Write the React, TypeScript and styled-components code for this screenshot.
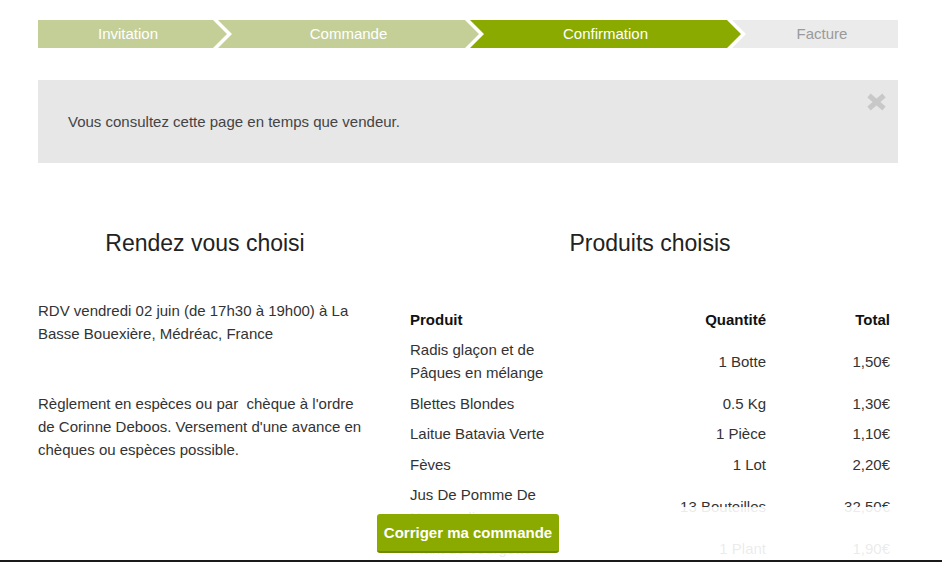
import React from "react";
import styled, { createGlobalStyle } from "styled-components";

const Global = createGlobalStyle`
  html, body { margin: 0; padding: 0; overflow: hidden; background: #fff; }
  body { font-family: "Liberation Sans", Arial, sans-serif; color: #333; }
`;

const Page = styled.div`
  width: 860px;
  margin-left: 38px;
  padding-top: 20px;
  padding-bottom: 120px;
`;

const Stepper = styled.div`
  display: flex;
  height: 28px;
`;

const D = 14;
const G = 5;

const Step = styled.div<{ $w: number; $first?: boolean; $last?: boolean; $state: string }>`
  flex: 0 0 ${(p) => p.$w}px;
  height: 28px;
  margin-left: ${(p) => (p.$first ? 0 : -(D - G))}px;
  padding: 0 ${(p) => (p.$last ? 0 : p.$first ? D - G : D)}px 0 ${(p) => (p.$first ? 0 : D)}px;
  box-sizing: border-box;
  text-align: center;
  line-height: 28px;
  font-size: 15px;
  color: ${(p) => (p.$state === "todo" ? "#9a9a9a" : "#fff")};
  background: ${(p) =>
    p.$state === "done" ? "#c4cf98" : p.$state === "active" ? "#8aaa00" : "#ebebeb"};
  clip-path: ${(p) => {
    const left = p.$first ? "0 100%, 0 0" : `0 100%, ${D}px 50%, 0 0`;
    const right = p.$last
      ? "100% 0, 100% 100%"
      : `calc(100% - ${D}px) 0, 100% 50%, calc(100% - ${D}px) 100%`;
    return `polygon(${left}, ${right})`;
  }};
`;

const Alert = styled.div`
  position: relative;
  margin-top: 32px;
  height: 83px;
  background: #e7e7e7;
  display: flex;
  align-items: center;
  padding-left: 30px;
  font-size: 15px;
  color: #444;
`;

const Close = styled.button`
  position: absolute;
  top: 12px;
  right: 11px;
  width: 22px;
  height: 20px;
  padding: 0;
  border: 0;
  background: none;
  cursor: pointer;
  display: flex;
  align-items: center;
  justify-content: center;
`;

const Columns = styled.div`
  display: grid;
  grid-template-columns: 334px 1fr;
  column-gap: 30px;
  margin-top: 65px;
`;

const Column = styled.div`
  display: flex;
  flex-direction: column;
`;

const Heading = styled.h2`
  margin: 0;
  font-weight: normal;
  font-size: 23px;
  line-height: 30px;
  color: #222;
  text-align: center;
`;

const Para = styled.p<{ $mt: number }>`
  margin: ${(p) => p.$mt}px 0 0;
  font-size: 15px;
  line-height: 23px;
  color: #333;
`;

const Table = styled.table`
  margin-top: 46px;
  width: 100%;
  border-collapse: collapse;
  table-layout: fixed;
  font-size: 15px;
  line-height: 23px;
  color: #333;
`;

const Th = styled.th<{ $align?: string }>`
  padding: 3.75px 8px;
  text-align: ${(p) => p.$align || "left"};
  font-weight: bold;
  color: #111;
`;

const Td = styled.td<{ $align?: string }>`
  padding: 3.75px 8px;
  text-align: ${(p) => p.$align || "left"};
  vertical-align: middle;
`;

const Footer = styled.div`
  position: fixed;
  left: 0;
  right: 0;
  bottom: 0;
  height: 55px;
  box-sizing: border-box;
  background: rgba(255, 255, 255, 0.9);
  border-bottom: 2px solid #1a1a1a;
  display: flex;
  padding-left: 38px;
`;

const FooterInner = styled.div`
  width: 860px;
  display: flex;
  align-items: center;
  justify-content: center;
`;

const Button = styled.button`
  font-family: "Liberation Sans", Arial, sans-serif;
  font-weight: bold;
  font-size: 15px;
  color: #fff;
  background: #8aaa00;
  border: 0;
  border-bottom: 2px solid #6f8a00;
  border-radius: 3px;
  height: 39px;
  padding: 0 7px;
  cursor: pointer;
`;

const steps = [
  { label: "Invitation", w: 189, state: "done" },
  { label: "Commande", w: 261, state: "done" },
  { label: "Confirmation", w: 271, state: "active" },
  { label: "Facture", w: 166, state: "todo" },
];

const products = [
  { name: "Radis glaçon et de Pâques en mélange", qty: "1 Botte", total: "1,50€" },
  { name: "Blettes Blondes", qty: "0.5 Kg", total: "1,30€" },
  { name: "Laitue Batavia Verte", qty: "1 Pièce", total: "1,10€" },
  { name: "Fèves", qty: "1 Lot", total: "2,20€" },
  { name: "Jus De Pomme De Normandie", qty: "13 Bouteilles", total: "32,50€" },
  { name: "Plant de courgette", qty: "1 Plant", total: "1,90€" },
  { name: "Oeufs frais", qty: "6 Pièces", total: "2,10€" },
];

export default function App() {
  return (
    <>
      <Global />
      <Page>
        <Stepper>
          {steps.map((s, i) => (
            <Step
              key={s.label}
              $w={s.w}
              $first={i === 0}
              $last={i === steps.length - 1}
              $state={s.state}
            >
              {s.label}
            </Step>
          ))}
        </Stepper>

        <Alert>
          Vous consultez cette page en temps que vendeur.
          <Close aria-label="Fermer">
            <svg width="21" height="18" viewBox="0 0 21 18">
              <path d="M3 2.5 L18 15.5 M18 2.5 L3 15.5" stroke="#c8c8c8" strokeWidth="5" strokeLinecap="butt" />
            </svg>
          </Close>
        </Alert>

        <Columns>
          <Column>
            <Heading>Rendez vous choisi</Heading>
            <Para $mt={41}>
              RDV vendredi 02 juin (de 17h30 à 19h00) à La Basse Bouexière, Médréac, France
            </Para>
            <Para $mt={47}>
              Règlement en espèces ou par&nbsp; chèque à l'ordre de Corinne Deboos. Versement d'une avance en chèques ou espèces possible.
            </Para>
          </Column>
          <Column>
            <Heading>Produits choisis</Heading>
            <Table>
              <colgroup>
                <col style={{ width: 166 }} />
                <col style={{ width: 206 }} />
                <col style={{ width: 124 }} />
              </colgroup>
              <thead>
                <tr>
                  <Th>Produit</Th>
                  <Th $align="right">Quantité</Th>
                  <Th $align="right">Total</Th>
                </tr>
              </thead>
              <tbody>
                {products.map((p) => (
                  <tr key={p.name}>
                    <Td>{p.name}</Td>
                    <Td $align="right">{p.qty}</Td>
                    <Td $align="right">{p.total}</Td>
                  </tr>
                ))}
              </tbody>
            </Table>
          </Column>
        </Columns>
      </Page>
      <Footer>
        <FooterInner>
          <Button>Corriger ma commande</Button>
        </FooterInner>
      </Footer>
    </>
  );
}
